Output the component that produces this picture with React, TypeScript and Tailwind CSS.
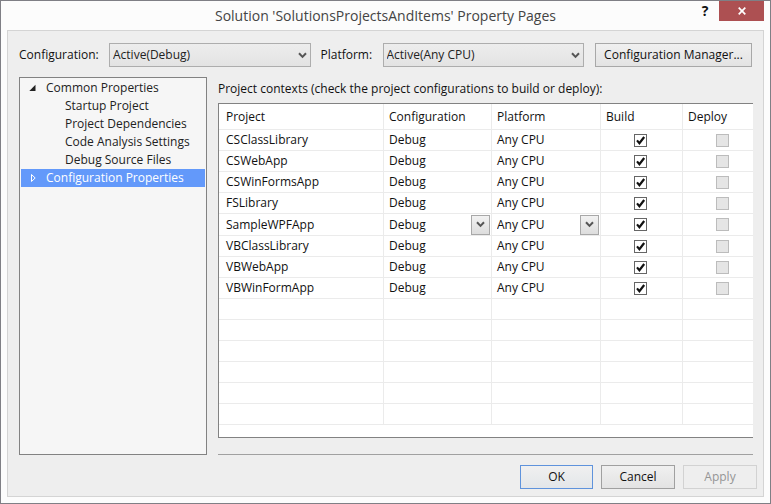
import React from "react";

const projects = [
  "CSClassLibrary",
  "CSWebApp",
  "CSWinFormsApp",
  "FSLibrary",
  "SampleWPFApp",
  "VBClassLibrary",
  "VBWebApp",
  "VBWinFormApp",
];
const activeProject = "SampleWPFApp";
const emptyRows = [1, 2, 3, 4, 5, 6];
const commonPages = ["Startup Project", "Project Dependencies", "Code Analysis Settings", "Debug Source Files"];

function Chevron() {
  return (
    <svg width="9" height="7" viewBox="0 0 9 7" fill="none" stroke="#555" strokeWidth="2" aria-hidden="true">
      <path d="M1 1.2 4.5 4.9 8 1.2" />
    </svg>
  );
}

function ComboBox({ id, value }: { id: string; value: string }) {
  return (
    <div className="relative min-w-0 flex-1">
      <select
        id={id}
        className="block h-6 w-full appearance-none border border-[#adadad] bg-linear-to-b from-[#ededed] to-[#e3e3e3] pl-[3px] text-[#222]"
      >
        <option>{value}</option>
      </select>
      <span className="pointer-events-none absolute inset-y-0 right-1 flex items-center">
        <Chevron />
      </span>
    </div>
  );
}

function CellComboBox({ label, value }: { label: string; value: string }) {
  return (
    <div className="relative">
      <select aria-label={label} className="block h-5 w-full appearance-none bg-white pl-[5px]">
        <option>{value}</option>
      </select>
      <span className="pointer-events-none absolute inset-y-0 right-px flex w-[19px] items-center justify-center border border-[#a8a8a8] bg-linear-to-b from-[#f2f2f2] to-[#dddddd]">
        <Chevron />
      </span>
    </div>
  );
}

function BuildBox({ project }: { project: string }) {
  return (
    <span className="relative block size-[13px]">
      <input
        type="checkbox"
        defaultChecked
        aria-label={`Build ${project}`}
        className="peer block size-[13px] appearance-none border border-[#666] bg-white"
      />
      <svg
        className="pointer-events-none absolute inset-0 hidden peer-checked:block"
        width="13"
        height="13"
        viewBox="0 0 13 13"
        fill="none"
        stroke="#111"
        strokeWidth="2.2"
        aria-hidden="true"
      >
        <path d="M3 6.4 5.4 9.2 10.2 3" />
      </svg>
    </span>
  );
}

const buttonBase = "h-6 border text-center";
const cell = "border-b border-[#ebebeb] p-0";
const divided = "border-b border-r border-[#ebebeb] p-0";

export default function App() {
  return (
    <div className="border border-[#7f7f85] bg-[#fcfcfc] pb-[6px] font-['Open_Sans','Noto_Sans',sans-serif] text-[12px] leading-[18px] text-[#111]">
      <header className="grid h-[29px] grid-cols-[1fr_auto_1fr] items-start">
        <h1 className="col-start-2 pt-1 text-[14px] leading-[22px] text-[#444]">
          Solution 'SolutionsProjectsAndItems' Property Pages
        </h1>
        <div className="flex justify-end pr-[6px]">
          <button aria-label="Help" className="h-5 w-7 text-[14px] leading-5 font-bold">
            ?
          </button>
          <button aria-label="Close" className="flex h-5 w-[45px] items-center justify-center bg-[#ad5052]">
            <svg width="8" height="8" viewBox="0 0 8 8" stroke="#fff" strokeWidth="1.7" aria-hidden="true">
              <path d="M.7.7 7.3 7.3M7.3.7.7 7.3" />
            </svg>
          </button>
        </div>
      </header>

      <main className="mx-[6px] border border-[#d4d4d4] bg-[#eeeeee] pt-3 pb-[7px] pl-[11px]">
        <div className="flex items-center pr-[11px]">
          <label htmlFor="configuration" className="w-[90px] shrink-0">
            Configuration:
          </label>
          <ComboBox id="configuration" value="Active(Debug)" />
          <label htmlFor="platform" className="w-[72px] shrink-0 pl-[10px]">
            Platform:
          </label>
          <ComboBox id="platform" value="Active(Any CPU)" />
          <button className="ml-[11px] h-6 w-[157px] shrink-0 border border-[#a8a8a8] bg-linear-to-b from-[#f0f0f0] to-[#e3e3e3]">
            Configuration Manager...
          </button>
        </div>

        <div className="mt-[10px] flex gap-[11px] pr-[10px]">
          <nav className="w-[188px] shrink-0 border border-[#828282] bg-[#f6f6f6] p-px text-[#222]">
            <button className="flex w-full items-center pl-2 text-left">
              <svg width="8" height="8" viewBox="0 0 8 8" fill="#222" aria-hidden="true">
                <path d="M6.5.8V7H.3z" />
              </svg>
              <span className="pl-[9px]">Common Properties</span>
            </button>
            <ul>
              {commonPages.map((page) => (
                <li key={page}>
                  <a href="#" className="block pl-11">
                    {page}
                  </a>
                </li>
              ))}
            </ul>
            <button className="flex w-full items-center bg-[#6399fa] pl-2 text-left text-white">
              <svg width="8" height="10" viewBox="0 0 8 10" fill="none" stroke="#fff" aria-hidden="true">
                <path d="M2.5 1.5v7L6.2 5z" />
              </svg>
              <span className="pl-[9px]">Configuration Properties</span>
            </button>
          </nav>

          <section className="min-w-0 flex-1">
            <h2 className="pt-[3px] pb-[5px]">Project contexts (check the project configurations to build or deploy):</h2>
            <div className="border-y border-l border-[#828282] bg-white pb-3">
              <table className="w-full table-fixed border-separate border-spacing-0">
                <colgroup>
                  <col />
                  <col className="w-[108px]" />
                  <col className="w-[109px]" />
                  <col className="w-[82px]" />
                  <col className="w-[70px]" />
                </colgroup>
                <thead>
                  <tr className="h-[26px] text-left">
                    <th className={`${divided} pl-[7px]! font-normal`}>Project</th>
                    <th className={`${divided} pl-[5px]! font-normal`}>Configuration</th>
                    <th className={`${divided} pl-[5px]! font-normal`}>Platform</th>
                    <th className={`${divided} pl-[5px]! font-normal`}>Build</th>
                    <th className={`${cell} pl-[5px]! font-normal`}>Deploy</th>
                  </tr>
                </thead>
                <tbody>
                  {projects.map((name) => (
                    <tr key={name} className={name === activeProject ? "h-[22px]" : "h-[21px]"}>
                      <td className={`${divided} pl-[7px]!`}>{name}</td>
                      <td className={divided}>
                        {name === activeProject ? (
                          <CellComboBox label="Project configuration" value="Debug" />
                        ) : (
                          <span className="block pl-[5px]">Debug</span>
                        )}
                      </td>
                      <td className={divided}>
                        {name === activeProject ? (
                          <CellComboBox label="Project platform" value="Any CPU" />
                        ) : (
                          <span className="block pl-[5px]">Any CPU</span>
                        )}
                      </td>
                      <td className={`${divided} pl-[33px]!`}>
                        <BuildBox project={name} />
                      </td>
                      <td className={`${cell} pl-[33px]!`}>
                        <input
                          type="checkbox"
                          disabled
                          aria-label={`Deploy ${name}`}
                          className="block size-[13px] appearance-none border border-[#bcbcbc] bg-[#e5e5e5]"
                        />
                      </td>
                    </tr>
                  ))}
                  {emptyRows.map((row) => (
                    <tr key={row} className="h-[21px]">
                      <td className={divided} />
                      <td className={divided} />
                      <td className={divided} />
                      <td className={divided} />
                      <td className={cell} />
                    </tr>
                  ))}
                </tbody>
              </table>
            </div>
            <hr className="mt-4 border-t border-[#a0a0a0]" />
          </section>
        </div>

        <footer className="mt-[10px] flex justify-end gap-2 pr-[6px]">
          <button className={`${buttonBase} w-[73px] border-[#5f93dc] bg-linear-to-b from-[#f0f0f0] to-[#e3e6e9]`}>OK</button>
          <button className={`${buttonBase} w-[74px] border-[#a0a0a0] bg-linear-to-b from-[#f0f0f0] to-[#e3e3e3]`}>Cancel</button>
          <button disabled className={`${buttonBase} w-[74px] border-[#d2d2d2] bg-[#eeeeee] text-[#959595]`}>
            Apply
          </button>
        </footer>
      </main>
    </div>
  );
}
